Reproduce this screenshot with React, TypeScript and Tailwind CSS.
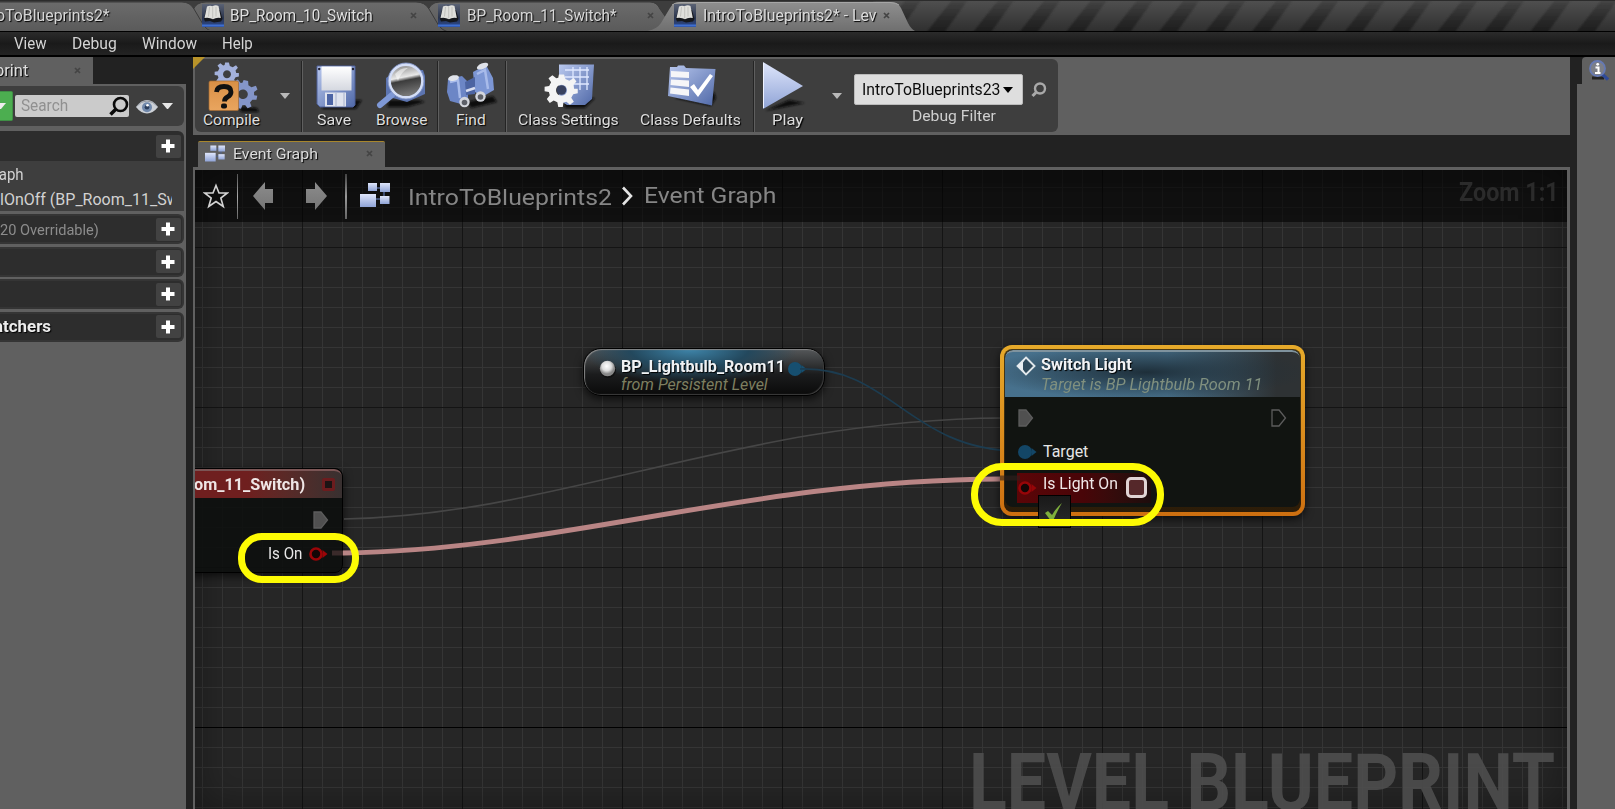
import React, { useLayoutEffect, useRef, useState } from "react";

type TextProps = { w: number; className?: string; children: string };

/** A single line of text condensed or widened to a given advance width. */
function Text({ w, className = "", children }: TextProps) {
  const ref = useRef<HTMLSpanElement>(null);
  const [scale, setScale] = useState(1);
  useLayoutEffect(() => {
    if (ref.current) setScale(w / ref.current.offsetWidth);
  }, [w, children]);
  return (
    <span className={`block shrink-0 whitespace-pre leading-[18px] ${className}`} style={{ width: w }}>
      <span ref={ref} className="inline-block origin-left" style={{ transform: `scaleX(${scale})` }}>
        {children}
      </span>
    </span>
  );
}

const shadow = "[text-shadow:1px_1px_1px_#000]";

function Close() {
  return (
    <svg width="7" height="7" viewBox="0 0 7 7" className="shrink-0">
      <path d="M1 1L6 6M6 1L1 6" stroke="#444" strokeWidth="1.700" />
    </svg>
  );
}

function Book() {
  return (
    <svg width="22" height="23" viewBox="0 0 22 23" className="shrink-0">
      <defs>
        <linearGradient id="bk" x2="0" y2="1">
          <stop offset="0" stopColor="#5a6274" />
          <stop offset=".6" stopColor="#2a344c" />
          <stop offset="1" stopColor="#2b4a94" />
        </linearGradient>
      </defs>
      <rect width="22" height="23" fill="url(#bk)" />
      <rect y="20.500" width="22" height="2" fill="#3f6fd0" />
      <path d="M2 15L4 6H18L20.500 15L19 17.500L12 18.500L8 17L3 17.500Z" fill="#15171c" />
      <path d="M2.500 14L5 2.500Q8 1 10.500 2.300Q13.500 .6 16.500 2L18.800 14Q14 13.200 11 15.300Q7 13 2.500 14Z" fill="#dfdfdb" />
      <path d="M10.700 3V14.500M7.500 3L6.500 12.500M14 3V12.500" stroke="#b9b9b5" strokeWidth=".8" />
    </svg>
  );
}

function TabShapes() {
  return (
    <svg className="absolute inset-0" width="1615" height="32" viewBox="0 0 1615 32">
      <defs>
        <linearGradient id="tabi" x2="0" y2="1">
          <stop offset="0" stopColor="#6b6b6b" />
          <stop offset="1" stopColor="#5a5a5a" />
        </linearGradient>
        <linearGradient id="taba" x2="0" y2="1">
          <stop offset="0" stopColor="#8f8f8f" />
          <stop offset="1" stopColor="#6e6e6e" />
        </linearGradient>
        <linearGradient id="strip" x2="0" y2="1">
          <stop offset="0" stopColor="#000" stopOpacity="0" />
          <stop offset="1" stopColor="#000" stopOpacity=".42" />
        </linearGradient>
        <linearGradient id="stripe" x2="0" y2="1">
          <stop offset="0" stopColor="#464646" />
          <stop offset=".6" stopColor="#373737" />
          <stop offset="1" stopColor="#323232" />
        </linearGradient>
        <filter id="stripeblur"><feGaussianBlur stdDeviation="1.300 0" /></filter>
      </defs>
      <rect width="1615" height="32" fill="#505050" />
      <g filter="url(#stripeblur)">
        {Array.from({ length: 18 }, (_, i) => (
          <path key={i} d="M22 0H38L15 32H-3Z" transform={`translate(${i * 46.4 + 837} 0)`} fill="url(#stripe)" />
        ))}
      </g>
      <rect width="1615" height="32" fill="url(#strip)" />
      <rect width="860" height="32" fill="#3d3d3d" />
      <path d="M0 0H1615" stroke="#2c2c2c" strokeWidth="2" />
      <path d="M427 32V14Q429 2 440 2H650Q657 2 660 9L672 26L690 32Z" fill="url(#tabi)" stroke="#3a3a3a" />
      <path d="M193 32V10Q196 2 206 2H416Q425 2 429 9L439 26Q442 30 448 32Z" fill="url(#tabi)" stroke="#3a3a3a" />
      <path d="M-5 32V2H182Q190 2 194 9L204 26Q207 30 213 32Z" fill="url(#tabi)" stroke="#3a3a3a" />
      <path d="M202 32V26L206 30H430L438 32Z" fill="#5a5a5a" />
      <path d="M640 32Q656 31 661 23L670 8Q673 2 681 2H890Q898 2 901 8L908 23Q912 31 918 32Z" fill="url(#taba)" />
      <path d="M672 5Q675 2.500 681 2.500H890Q896 2.500 899 5" stroke="#a6a6a6" fill="none" />
    </svg>
  );
}

function TitleTabs() {
  return (
    <div className="relative h-8 shrink-0 overflow-hidden border-b border-black">
      <TabShapes />
      <div className="relative flex h-[31px] items-center">
        <Text w={114} className={`-ml-1 mr-[92px] text-[16px] text-[#d6d6d6] ${shadow}`}>oToBlueprints2*</Text>
        <Book />
        <Text w={143} className={`ml-1.5 mr-[37px] text-[16px] text-[#e0e0e0] ${shadow}`}>BP_Room_10_Switch</Text>
        <Close />
        <div className="w-[21px] shrink-0" />
        <Book />
        <Text w={150} className={`ml-[7px] mr-[30px] text-[16px] text-[#d8d8d8] ${shadow}`}>BP_Room_11_Switch*</Text>
        <Close />
        <div className="w-[20px] shrink-0" />
        <Book />
        <Text w={174} className={`ml-[7px] mr-[6px] text-[16px] text-[#dcdcdc] ${shadow}`}>IntroToBlueprints2* - Lev</Text>
        <Close />
      </div>
    </div>
  );
}

function MenuBar() {
  return (
    <div className="flex h-[25px] shrink-0 items-center border-b-2 border-black bg-linear-to-b from-[#2b2b2b] from-0% via-[#1a1a1a] via-50% to-[#232323] pl-3.5 text-[16px] text-[#d4d4d4]">
      <Text w={33} className="mr-[25px]">View</Text>
      <Text w={45} className="mr-[25px]">Debug</Text>
      <Text w={55} className="mr-[25px]">Window</Text>
      <Text w={31}>Help</Text>
    </div>
  );
}

function Caret({ className, w = 11 }: { className?: string; w?: number }) {
  return (
    <svg width={w} height={w * 0.6} viewBox="0 0 10 6" className={`shrink-0 ${className ?? ""}`}>
      <path d="M0 0H10L5 6Z" fill="currentColor" />
    </svg>
  );
}

function Plus() {
  return (
    <div className="flex h-[23px] w-[25px] shrink-0 items-center justify-center rounded-[2px] bg-[#424242] pr-px">
      <svg width="14" height="14" viewBox="0 0 14 14">
        <path d="M7 .5V13.500M.5 7H13.500" stroke="#fff" strokeWidth="4" />
      </svg>
    </div>
  );
}

function SectionRow({ children }: { children?: React.ReactNode }) {
  return (
    <div className="mb-[2.500px] flex h-[30px] w-[184px] shrink-0 items-center rounded-r-md border-2 border-l-0 border-[#353535] bg-[#2d2d2d] pr-[1px]">
      <div className="grow pt-px">{children}</div>
      <Plus />
    </div>
  );
}

function LeftPanel() {
  return (
    <div className="flex w-[186px] shrink-0 flex-col overflow-hidden">
      <div className="flex h-[27px] w-[93px] shrink-0 items-center bg-[#606060]">
        <Text w={33} className={`-ml-[5px] mr-[46px] text-[16px] text-[#dedede] ${shadow}`}>print</Text>
        <Close />
      </div>
      <div className="flex grow flex-col bg-[#606060] pt-[2px]">
        <div className="mb-[5px] flex h-10 w-[184px] shrink-0 items-center rounded-r-md bg-[#3e3e3e]">
          <div className="flex h-[30px] w-[13px] items-center overflow-hidden rounded-r-xs border border-l-0 border-[#3f8f45] bg-[#4cae50]">
            <Caret className="-ml-[5px] text-[#eee]" />
          </div>
          <div className="ml-[2px] flex h-[22px] w-[114px] items-center rounded-xs bg-[#cbcbcb] pl-1.5">
            <Text w={47} className="text-[16px] text-[#909090]">Search</Text>
            <svg width="20" height="20" viewBox="0 0 20 20" className="ml-[41px]">
              <circle cx="11.500" cy="8.500" r="6.500" fill="none" stroke="#0a0a0a" strokeWidth="2.600" />
              <path d="M7 13L1.500 18.500" stroke="#0a0a0a" strokeWidth="3.600" />
            </svg>
          </div>
          <svg width="22" height="14" viewBox="0 0 22 14" className="ml-[7px] mt-px">
            <path d="M0 7Q5 0 11 0Q17 0 22 7Q17 13.500 11 13.500Q5 13.500 0 7Z" fill="#ccd0d6" />
            <path d="M1 6Q5 1 11 1Q17 1 21 6" fill="none" stroke="#8f959e" />
            <circle cx="11" cy="7.300" r="5" fill="#7088ab" />
            <circle cx="11" cy="7.300" r="2.300" fill="#2b3e5c" />
            <circle cx="11.500" cy="5.300" r="1.300" fill="#fff" />
          </svg>
          <Caret className="ml-1 text-[#e6e6e6]" />
        </div>
        <div className="mb-[3px] w-[184px] shrink-0">
          <div className="flex h-[30px] items-center justify-end rounded-tr-md bg-[#2d2d2d] pr-[3px]"><Plus /></div>
          <div className="flex h-[50px] flex-col overflow-hidden bg-[#3e3e3e] pt-[5px] text-[16px] text-[#d2d2d2]">
            <Text w={30} className="-ml-[6px] mb-[7px]">raph</Text>
            <div className="w-[172px] overflow-hidden"><Text w={179}>lOnOff (BP_Room_11_Sw</Text></div>
          </div>
        </div>
        <SectionRow><Text w={99} className="text-[14px] text-[#8c8c8c]">20 Overridable)</Text></SectionRow>
        <SectionRow />
        <SectionRow />
        <SectionRow><Text w={57} className={`-ml-1.5 text-[16px] font-bold text-[#ececec] ${shadow}`}>atchers</Text></SectionRow>
      </div>
    </div>
  );
}

const gear =
  "M-2 -12H2L3 -8.500L6 -7.200L9.500 -9.300L11.500 -6.500L9 -3.800L9.700 -1H12.500V2.500L9 3.300L7.500 6L9.500 9L6.500 11.300L3.800 9L1.500 9.700L1 13H-2.500L-3.200 9.500L-6 8L-9 10L-11.300 7L-9 4L-9.700 1.500L-13 1V-2.500L-9.500 -3L-8 -6L-10 -9L-7 -11.300L-4 -9L-2.500 -9.500ZM0 -4A4.200 4.200 0 1 0 .01 -4Z";

function Grads() {
  return (
    <svg width="0" height="0" className="absolute">
      <defs>
        <linearGradient id="blue" x2="1" y2="1">
          <stop offset="0" stopColor="#b9c8ee" />
          <stop offset="1" stopColor="#5069a8" />
        </linearGradient>
        <linearGradient id="pale" x2="0" y2="1">
          <stop offset="0" stopColor="#dfe6fb" />
          <stop offset="1" stopColor="#8fa3d6" />
        </linearGradient>
        <linearGradient id="white" x2="0" y2="1">
          <stop offset="0" stopColor="#fff" />
          <stop offset="1" stopColor="#d5d8e0" />
        </linearGradient>
        <linearGradient id="orange" x2="0" y2="1">
          <stop offset="0" stopColor="#d98f45" />
          <stop offset="1" stopColor="#e9a55f" />
        </linearGradient>
        <linearGradient id="lens" x2=".2" y2="1">
          <stop offset="0" stopColor="#777" />
          <stop offset=".45" stopColor="#e8e8e8" />
          <stop offset=".56" stopColor="#3c3c3c" />
          <stop offset="1" stopColor="#777" />
        </linearGradient>
        <linearGradient id="arrow" x2="0" y2="1">
          <stop offset="0" stopColor="#8c8c8c" />
          <stop offset="1" stopColor="#757575" />
        </linearGradient>
        <radialGradient id="ball" cx=".45" cy=".35">
          <stop offset="0" stopColor="#fff" />
          <stop offset=".6" stopColor="#dcdcdc" />
          <stop offset="1" stopColor="#888" />
        </radialGradient>
        <filter id="soft" x="-20%" y="-20%" width="140%" height="140%"><feGaussianBlur stdDeviation="1.200" /></filter>
      </defs>
    </svg>
  );
}

const icons: Record<string, React.ReactNode> = {
  Compile: (
    <>
      <path d="M30 44L48 46L50 50L32 50Z" fill="#111" filter="url(#soft)" />
      <path d={gear} transform="translate(18 12) scale(.95)" fill="#a3b1dc" fillRule="evenodd" />
      <path d={gear} transform="translate(34 32) rotate(12) scale(1.150)" fill="#8495c8" fillRule="evenodd" />
      <rect x="0" y="19" width="29.500" height="29.500" rx="1.500" fill="url(#orange)" stroke="#a36a32" strokeWidth=".7" />
      <path d="M7.500 30Q8 24.500 15 24.500Q22 24.500 22 30Q22 33 18.500 35Q15.500 36.500 15.500 39.500" fill="none" stroke="#111" strokeWidth="4.800" />
      <rect x="12" y="41.500" width="6" height="5" rx="2" fill="#111" />
    </>
  ),
  Save: (
    <>
      <path d="M8 38H46L40 47H6Z" fill="#111" filter="url(#soft)" />
      <path d="M1 4H39V43L37 45H4L1 42Z" fill="url(#blue)" stroke="#4c5f98" />
      <rect x="5.500" y="4.500" width="30" height="24" fill="url(#white)" />
      <rect x="9" y="30.500" width="21" height="14" fill="#dfe3ee" />
      <rect x="11" y="32" width="6" height="11" fill="#4d65a5" />
      <path d="M20 31V44M28 31V44" stroke="#a9b3cd" />
      <circle cx="3.200" cy="7" r="1.200" fill="#223" /><circle cx="37" cy="7" r="1.200" fill="#223" />
    </>
  ),
  Browse: (
    <>
      <path d="M12 38L42 38L48 40L30 45H10Z" fill="#111" filter="url(#soft)" />
      <path d="M9 16L20 8H46L48 14V32L30 40L9 34Z" fill="#5c74b0" />
      <path d="M3 43L15 33" stroke="#7e98d6" strokeWidth="6" strokeLinecap="round" />
      <circle cx="29" cy="19" r="16.500" fill="url(#lens)" stroke="#d4def7" strokeWidth="2.800" />
      <circle cx="29" cy="19" r="18" fill="none" stroke="#7f92c4" strokeWidth=".9" />
      <path d="M18 12Q24 5 31 6Q24 10 21 19Z" fill="#fff" opacity=".5" />
    </>
  ),
  Find: (
    <>
      <path d="M20 40L46 34L50 40L24 46Z" fill="#111" filter="url(#soft)" />
      <path d="M1 17L15 14L21 20V36L14 42L3 39L0 30Z" fill="#6c86c6" />
      <path d="M26 10L39 3L46 16L47 28L35 35L28 30Z" fill="#7c96d4" />
      <path d="M18 20L28 15V32L19 33Z" fill="#4c64a2" />
      <path d="M3 20L11 18L13 36" stroke="#a8bbea" strokeWidth="2.500" fill="none" />
      <path d="M30 12L38 8L41 27" stroke="#a8bbea" strokeWidth="2.500" fill="none" />
      <ellipse cx="6.500" cy="16" rx="5.500" ry="2.800" fill="#e0e3ea" transform="rotate(-12 7 16)" />
      <ellipse cx="35.500" cy="4" rx="6" ry="2.800" fill="#e0e3ea" transform="rotate(-22 36 4)" />
      <circle cx="17.500" cy="40" r="5.200" fill="#d3d6dd" /><circle cx="17.500" cy="40.500" r="2.800" fill="#5d6068" />
      <circle cx="33.500" cy="34.500" r="5.200" fill="#d3d6dd" /><circle cx="33.500" cy="35" r="2.800" fill="#5d6068" />
      <path d="M19 29L28 26" stroke="#d9def0" strokeWidth="2.500" />
    </>
  ),
  "Class Settings": (
    <>
      <path d="M18 38L44 36L50 36L40 46H20Z" fill="#111" filter="url(#soft)" />
      <path d="M14 2.500H49L47 37L40 43H22L14 38Z" fill="url(#blue)" />
      <path d="M20 8H44M20 15H44M26 22H44M28 5V26M35 5V28M42 5V28" stroke="#dfe8ff" strokeWidth="1.300" />
      <path d={gear} transform="translate(16.500 28) scale(1.300)" fill="#f4f4f4" fillRule="evenodd" />
      <circle cx="16.500" cy="28" r="4.800" fill="#38415e" />
    </>
  ),
  "Class Defaults": (
    <>
      <path d="M6 36L43 44L48 36L46 30Z" fill="#111" filter="url(#soft)" />
      <path d="M2 5H9L10 3.500H16L18 6L47.500 7L44 43.500L0 34Z" fill="url(#blue)" />
      <path d="M3 9L21 10V16L3 15ZM3 17.500L21 18.500V25L2.500 23ZM2.500 25.500L21 27.500V34L2 31.500Z" fill="#f6f6f8" />
      <path d="M22 25L26 22L30 28L42 12L45 14L30 35Z" fill="#fff" />
    </>
  ),
  Play: (
    <>
      <path d="M2 49L26 38L42 41Z" fill="#101010" filter="url(#soft)" />
      <path d="M0 0L40 24L0 47Z" fill="url(#pale)" />
      <path d="M0.500 1V46" stroke="#eef2ff" />
    </>
  ),
};

type ToolProps = { label: string; textW: number; itemW: string; iconW: string; textShift?: string; caret?: string };

function Tool({ label, textW, itemW, iconW, textShift = "", caret }: ToolProps) {
  return (
    <div className={`flex shrink-0 ${itemW}`}>
      <div className="flex flex-col items-center">
        <svg height="50" className={`overflow-visible ${iconW}`}>{icons[label]}</svg>
        <Text w={textW} className={`-mt-px text-[15.500px] text-[#dedede] ${textShift} ${shadow}`}>{label}</Text>
      </div>
      {caret && <Caret w={10} className={`mt-[31px] text-[#b9b9b9] ${caret}`} />}
    </div>
  );
}

function Sep() {
  return <div className="my-px h-[71px] w-[2px] shrink-0 border-l border-[#242424] bg-[#5f5f5f]" />;
}

function Toolbar() {
  return (
    <div className="relative h-[78px] shrink-0 bg-[#606060] pl-[2px] pt-[2px]">
      <div className="flex h-[73px] w-[863px] rounded-md bg-[#3e3e3e] pt-px">
        <div className="flex pt-[2px] pl-2">
          <Tool label="Compile" textW={57} itemW="w-[98px]" iconW="w-[46px]" caret="ml-5" />
        </div>
        <Sep />
        <div className="flex pl-[13px] pt-[2px]">
          <Tool label="Save" textW={34} itemW="w-[60px]" iconW="w-10" textShift="-ml-1" />
          <Tool label="Browse" textW={51} itemW="w-[61px]" iconW="w-[50px]" />
        </div>
        <Sep />
        <div className="flex pl-2 pt-[2px]">
          <Tool label="Find" textW={30} itemW="w-[58px]" iconW="w-[48px]" />
        </div>
        <Sep />
        <div className="flex pl-[11px] pt-[2px]">
          <Tool label="Class Settings" textW={101} itemW="w-[122px]" iconW="w-12" />
          <Tool label="Class Defaults" textW={101} itemW="w-[113px]" iconW="w-[46px]" />
        </div>
        <Sep />
        <div className="flex pl-[8px] pt-[2px]">
          <Tool label="Play" textW={31} itemW="w-[91px]" iconW="w-10" caret="ml-[29px]" textShift="ml-[8px]" />
        </div>
        <div className="flex flex-col items-center pt-[14px]">
          <div className="flex h-[31px] w-[169px] items-center rounded-xs border border-[#bbb] bg-[#dedede] pl-[7px]">
            <Text w={138} className="mr-[3px] text-[16px] text-[#0c0c0c]">IntroToBlueprints23</Text>
            <Caret w={10} className="text-black" />
          </div>
          <Text w={84} className="ml-[30px] mt-[2px] text-[15.500px] text-[#cfcfcf]">Debug Filter</Text>
        </div>
        <svg width="16" height="16" viewBox="0 0 16 16" className="ml-2 mt-[22px]">
          <circle cx="9" cy="6.500" r="5" fill="none" stroke="#a9a9a9" strokeWidth="2.400" />
          <path d="M5 10.500L1.500 14" stroke="#a9a9a9" strokeWidth="3" />
        </svg>
      </div>
      <svg width="12" height="12" className="absolute left-0 top-0"><path d="M0 0H12L0 12Z" fill="#b8932a" /></svg>
    </div>
  );
}

function GraphIcon({ className }: { className: string }) {
  return (
    <svg viewBox="0 0 30 24" className={`shrink-0 ${className}`}>
      <path d="M14 5H22M24 8V18M12 16H22" stroke="#4d6290" strokeWidth="1.500" />
      <rect x="8" y="0" width="9" height="8" fill="url(#pale)" />
      <rect x="20" y="0" width="10" height="9" fill="url(#pale)" />
      <rect x="0" y="11" width="16" height="13" fill="url(#pale)" />
      <rect x="20" y="13" width="9.500" height="8" fill="url(#pale)" />
    </svg>
  );
}

function Breadcrumb() {
  return (
    <div className="relative flex h-[52px] items-center bg-black/58">
      <svg width="26" height="26" viewBox="0 0 26 26" className="ml-2 shrink-0">
        <path d="M13 2.500L16 10H24.300L17.800 15L20.300 23.500L13 18.500L5.700 23.500L8.200 15L1.700 10H10Z" fill="none" stroke="#d4d4d4" strokeWidth="1.600" />
      </svg>
      <div className="ml-2 h-[45px] w-px bg-linear-to-b from-[#555] via-[#aaa] to-[#666]" />
      <svg width="21" height="28" viewBox="0 0 21 28" className="-mt-px ml-[15px]"><path d="M0 14L12 0V7H20V21H12V28Z" fill="url(#arrow)" /></svg>
      <svg width="22" height="28" viewBox="0 0 22 28" className="-mt-px ml-[31px]"><path d="M22 14L10 0V7H1V21H10V28Z" fill="url(#arrow)" /></svg>
      <div className="ml-[18px] h-[45px] w-[2px] bg-linear-to-b from-[#444] via-[#999] to-[#666]" />
      <GraphIcon className="-mt-0.5 ml-[13px] h-6 w-[30px]" />
      <Text w={204} className="ml-[18px] mt-px text-[22.500px] text-[#868686]">IntroToBlueprints2</Text>
      <svg width="13" height="20" viewBox="0 0 13 20" className="ml-[9px]"><path d="M2 1.500L10 10L2 18.500" fill="none" stroke="#e4e4e4" strokeWidth="2.600" /></svg>
      <Text w={132} className="-mt-[3px] ml-[10px] text-[22.500px] text-[#868686]">Event Graph</Text>
      <Text w={100} className="-mt-[6px] ml-auto mr-[8px] text-[25px] font-bold text-[#2b2b2b]">Zoom 1:1</Text>
    </div>
  );
}

function Wires() {
  return (
    <svg className="absolute left-0 top-0" width="1372" height="639" viewBox="195 170 1372 639">
      <path d="M344 519C560 515 740 419 1004 418" fill="none" stroke="#464646" strokeWidth="1.700" />
      <path d="M800 369C890 366 910 450 1018 451" fill="none" stroke="#1c3c50" strokeWidth="1.700" />
      <path d="M332 553H350" stroke="#3a2a2a" strokeWidth="5" />
      <path d="M343 553C560 550 750 480 1000 479" fill="none" stroke="#b98585" strokeWidth="5" />
    </svg>
  );
}

function Exec({ hollow }: { hollow?: boolean }) {
  return (
    <svg width="16" height="18" viewBox="0 0 16 18" className="shrink-0">
      <path d="M1 1H8L14.500 9L8 17H1Z" fill={hollow ? "none" : "#505050"} stroke="#5c5c5c" strokeWidth="1.300" />
    </svg>
  );
}

function Pin({ color, hollow }: { color: string; hollow?: boolean }) {
  return (
    <svg width="19" height="14" viewBox="0 0 19 14" className="shrink-0">
      <path d="M13.500 3L18.500 7L13.500 11Z" fill={color} />
      <circle cx="7" cy="7" r={hollow ? 5.5 : 7} fill={hollow ? "#140606" : color} stroke={hollow ? color : "none"} strokeWidth="2.600" />
    </svg>
  );
}

function EventNode() {
  return (
    <div className="absolute -left-3 top-[298px] h-[105px] w-[160px] overflow-hidden rounded-lg border border-black bg-[#0d100e]/90 shadow-[0_3px_10px_#000a]">
      <div className="flex h-[29px] items-center justify-between rounded-t-lg border-t-2 border-[#7b5555] bg-linear-to-r from-[#6f1f1f] from-40% to-[#383030] pl-[10px] pr-[7px]">
        <Text w={111} className="text-[16.500px] font-bold text-[#efe6e6]">om_11_Switch)</Text>
        <div className="size-[13px] rounded-xs border-[3px] border-[#6c1c1e] bg-[#1c1414]" />
      </div>
      <div className="flex justify-end pr-[13px] pt-[13px]"><Exec /></div>
      <div className="flex items-center justify-end gap-[7px] pr-[14px] pt-[16px]">
        <Text w={34} className="text-[16px] text-[#e8e8e8]">Is On</Text>
        <Pin color="#9b0508" hollow />
      </div>
    </div>
  );
}

function VariableNode() {
  return (
    <div className="absolute left-[388px] top-[178px] flex h-[48px] w-[242px] rounded-[18px] border border-black bg-[radial-gradient(ellipse_45%_75%_at_44%_0%,#3f86ab,#23485d_55%,transparent),linear-gradient(#55585a,#1b1c1d_55%,#0a0a0a)] pt-[10px] shadow-[inset_1px_1px_1px_#888,inset_-1px_-1px_1px_#3c3c3c,0_3px_8px_#000a]">
      <svg width="18" height="18" viewBox="0 0 18 18" className="ml-[15px] mt-px shrink-0"><circle cx="9" cy="10" r="8" fill="#111" /><circle cx="8.500" cy="8.500" r="7.700" fill="url(#ball)" /></svg>
      <div className="ml-[4px]">
        <Text w={164} className={`!leading-4 text-[16.500px] font-bold text-[#f0f2f4] ${shadow}`}>BP_Lightbulb_Room11</Text>
        <Text w={147} className="mt-[2px] !leading-4 text-[16px] italic text-[#7e7f60]">from Persistent Level</Text>
      </div>
      <div className="ml-[3px] mt-[3px]"><Pin color="#164f70" /></div>
    </div>
  );
}

function FunctionNode() {
  return (
    <div className="absolute left-[805px] top-[175px] h-[171px] w-[305px] rounded-xl bg-linear-to-b from-[#e6aa2a] to-[#cd6f10] p-[4px] shadow-[0_3px_8px_#000a]">
      <div className="h-full rounded-lg bg-linear-to-b from-[#4a3a15] to-[#2c1c08] p-px">
        <div className="flex h-[157px] flex-col overflow-hidden rounded-lg bg-[#111411]">
          <div className="flex h-[47px] shrink-0 rounded-t-lg border-t-2 border-[#7f939e] bg-[radial-gradient(ellipse_55%_60%_at_48%_45%,#1e2f3a,transparent),linear-gradient(90deg,#47718d_0%,#476f89_55%,#2e3234_92%)] pl-[11px] pt-[4px]">
            <svg width="20" height="20" viewBox="0 0 20 20" className="shrink-0">
              <path d="M10 1.500L18.500 10L10 18.500L1.500 10Z" fill="#2f4b5d" stroke="#dfe6ea" strokeWidth="1.900" />
              <path d="M10 1.500L7 6.500V13.500L10 18.500L1.500 10Z" fill="#e8eef2" />
            </svg>
            <div className="ml-[5px]">
              <Text w={91} className={`text-[16.500px] font-bold text-[#f2f4f6] ${shadow}`}>Switch Light</Text>
              <Text w={221} className="mt-[2px] text-[16px] italic text-[#80907f]">Target is BP Lightbulb Room 11</Text>
            </div>
          </div>
          <div className="mt-[12px] flex shrink-0 justify-between pl-[13px] pr-[13px]"><Exec /><Exec hollow /></div>
          <div className="mt-[16px] flex h-[18px] shrink-0 items-center pl-[13px]">
            <Pin color="#134666" />
            <Text w={45} className="ml-[6px] text-[16px] text-[#e6e6e6]">Target</Text>
          </div>
          <div className="ml-[12px] mt-[12px] flex h-[30px] w-[134px] shrink-0 bg-linear-to-r from-[#5c0507] via-[#480508] to-[#1d0c0c] pl-[1px]">
            <div className="pt-2"><Pin color="#960508" hollow /></div>
            <Text w={75} className="ml-[6px] mt-[2px] text-[16px] text-[#f0e8e8]">Is Light On</Text>
            <div className="ml-[8px] mt-1 size-[21px] shrink-0 rounded-[5px] border-[3px] border-[#e0d4d4] bg-[#55282a]" />
          </div>
        </div>
      </div>
    </div>
  );
}

function Canvas() {
  return (
    <div className="relative min-h-0 grow overflow-hidden bg-[#262626]">
      <div className="absolute inset-0 bg-[linear-gradient(90deg,#353535_1px,transparent_1px),linear-gradient(#353535_1px,transparent_1px)] bg-[length:20px_20px] bg-[position:7px_17px]" />
      <div className="absolute inset-0 bg-[linear-gradient(90deg,#141414_1px,transparent_1px),linear-gradient(#141414_1px,transparent_1px)] bg-[length:160px_160px] bg-[position:107px_77px]" />
      <div className="absolute left-0 top-[557px] h-px w-full bg-black" />
      <div className="absolute inset-0 shadow-[inset_0_0_40px_#0006]" />
      <Breadcrumb />
      <div className="absolute left-[774px] top-[573px] opacity-90">
        <Text w={586} className="text-[79px] font-bold !leading-[80px] text-[#4e4e4e]">LEVEL BLUEPRINT</Text>
      </div>
      <EventNode />
      <VariableNode />
      <Wires />
      <FunctionNode />
      <svg className="absolute left-[805px] top-[305px]" width="20" height="8"><path d="M0 3H20" stroke="#33201d" strokeWidth="5" opacity=".6" /></svg>
      <div className="absolute left-[843px] top-[325px] flex size-[33px] items-center justify-center border border-black bg-linear-to-b from-[#191919] to-[#2b2b2b]">
        <svg width="18" height="18" viewBox="0 0 18 18" className="-ml-0.5"><path d="M0 10L3 8L7 12Q11 5 17 0Q12 8 8 18H6Z" fill="#7fb03c" /></svg>
      </div>
      <div className="absolute left-[42.500px] top-[363px] h-[50px] w-[121px] rounded-3xl border-[7px] border-[#fdfb04]" />
      <div className="absolute left-[776px] top-[293px] h-[63px] w-[193px] rounded-[31px] border-[7px] border-[#fdfb04]" />
    </div>
  );
}

function GraphTab() {
  return (
    <div className="ml-[5px] mt-[6px] flex h-[26px] w-[187px] shrink-0 items-center rounded-t-xs border-t border-[#a8862c] bg-[#606060] pb-0.5 pl-[7px]">
      <GraphIcon className="h-[17px] w-[20px]" />
      <Text w={85} className={`ml-2 mr-[48px] text-[15.500px] text-[#dcdcdc] ${shadow}`}>Event Graph</Text>
      <Close />
    </div>
  );
}

function RightPanel() {
  return (
    <div className="flex w-[38px] shrink-0 flex-col">
      <div className="ml-[5px] h-[27px] shrink-0 rounded-tl-sm bg-[#606060] pl-[7px] pt-[3px]">
        <svg width="20" height="21" viewBox="0 0 20 21">
          <path d="M3 18H15" stroke="#222" strokeWidth="3" />
          <path d="M13 14L19 19.500" stroke="#2f4a98" strokeWidth="3.200" />
          <circle cx="8.500" cy="8.500" r="7.500" fill="#7c7f88" stroke="#6579b4" strokeWidth="1.800" />
          <path d="M6.500 7.500H9.500V12.500M6 13H11.500" stroke="#fff" strokeWidth="2" fill="none" />
          <circle cx="8.700" cy="4.300" r="1.400" fill="#fff" />
        </svg>
      </div>
      <div className="grow bg-[#606060]" />
    </div>
  );
}

export default function App() {
  return (
    <div className="flex h-[809px] w-[1615px] flex-col overflow-hidden bg-[#222] font-['Roboto',sans-serif]">
      <Grads />
      <TitleTabs />
      <MenuBar />
      <div className="flex min-h-0 grow gap-[7px]">
        <LeftPanel />
        <div className="flex w-[1377px] shrink-0 flex-col">
          <Toolbar />
          <GraphTab />
          <div className="flex min-h-0 grow border-[3px] border-b-0 border-l-2 border-[#606060]"><Canvas /></div>
        </div>
        <RightPanel />
      </div>
    </div>
  );
}
